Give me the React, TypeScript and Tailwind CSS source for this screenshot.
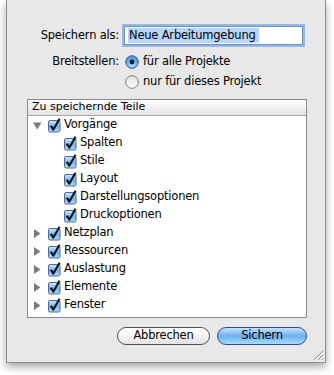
import React from 'react';

const font = { fontFamily: '"Lucida Grande", "DejaVu Sans", sans-serif' };

const CheckBox: React.FC = () => (
    <svg width="14" height="15" viewBox="0 0 14 15" className="shrink-0">
        <defs>
            <linearGradient id="cbg" x1="0" y1="0" x2="0" y2="1">
                <stop offset="0" stopColor="#d3eafd" />
                <stop offset="0.5" stopColor="#72b2ee" />
                <stop offset="1" stopColor="#b2dcfc" />
            </linearGradient>
        </defs>
        <rect x="0.5" y="2.5" width="11.5" height="11.5" rx="1.5" fill="url(#cbg)" stroke="#4a6a96" />
        <path d="M2.8 7.8 L5.4 11.6 L11.6 0.8" fill="none" stroke="#111" strokeWidth="2.1" strokeLinejoin="round" />
    </svg>
);

const Triangle: React.FC<{ open?: boolean }> = ({ open }) => (
    <svg width="9" height="9" viewBox="0 0 9 9" className="shrink-0">
        {open ? <path d="M0 1.5 H8.5 L4.25 8.5 Z" fill="#7b7b7b" /> : <path d="M1 0 L7.5 4.5 L1 9 Z" fill="#7b7b7b" />}
    </svg>
);

const Radio: React.FC<{ on?: boolean }> = ({ on }) => (
    <svg width="14" height="14" viewBox="0 0 14 14" className="shrink-0">
        <defs>
            <radialGradient id="rOn" cx="0.5" cy="0.75" r="0.6">
                <stop offset="0" stopColor="#b7e0ff" />
                <stop offset="1" stopColor="#4f97dc" />
            </radialGradient>
            <linearGradient id="rOff" x1="0" y1="0" x2="0" y2="1">
                <stop offset="0" stopColor="#e2e2e2" />
                <stop offset="1" stopColor="#ffffff" />
            </linearGradient>
        </defs>
        <circle cx="7" cy="7" r="6.3" fill={on ? 'url(#rOn)' : 'url(#rOff)'} stroke={on ? '#2f5a91' : '#7d7d7d'} />
        {on && <circle cx="7" cy="7" r="2.4" fill="#1c1c1c" />}
    </svg>
);

const Row: React.FC<{ label: string; level?: number; open?: boolean }> = ({ label, level = 0, open }) => (
    <div className="flex h-[18px] items-center">
        {level === 0 ? (
            <div className="flex w-[20px] items-center pl-[5px]">
                <Triangle open={open} />
            </div>
        ) : (
            <div className="w-[36px]" />
        )}
        <CheckBox />
        <span className="ml-[2px] text-[11.5px] tracking-[-0.2px] text-black">{label}</span>
    </div>
);

export default function App() {
    return (
        <div className="h-[375px] w-[334px] bg-white" style={font}>
            <div className="ml-[6px] flex h-[363px] w-[320px] flex-col border-x border-b border-[#8c8c8c] bg-[#e8e8e8] shadow-[0_4px_8px_rgba(0,0,0,0.35)]">
                <div className="mt-[26px] flex items-center">
                    <div className="w-[112px] text-right text-[11.5px] tracking-[-0.2px] text-black">Speichern als:</div>
                    <div className="ml-[5px] flex h-[19px] w-[179px] items-center border border-[#6c8fbf] bg-white px-[3px] shadow-[0_0_0_2px_rgba(120,170,230,0.75)]">
                        <span className="bg-[#b5d5ff] pl-px pr-[3px] text-[11.5px] leading-[15px] tracking-[-0.2px] text-black">Neue Arbeitumgebung</span>
                    </div>
                </div>
                <div className="mt-[9px] flex items-start">
                    <div className="flex h-[16px] w-[112px] items-center justify-end text-[11.5px] tracking-[-0.2px] text-black">Breitstellen:</div>
                    <div className="ml-[6px] flex flex-col gap-[4px]">
                        <div className="flex h-[16px] items-center gap-[4px]">
                            <Radio on />
                            <span className="text-[11.5px] tracking-[-0.2px] text-black">für alle Projekte</span>
                        </div>
                        <div className="flex h-[16px] items-center gap-[4px]">
                            <Radio />
                            <span className="text-[11.5px] tracking-[-0.2px] text-black">nur für dieses Projekt</span>
                        </div>
                    </div>
                </div>
                <div className="ml-[20px] mt-[9px] h-[219px] w-[280px] border border-[#8a8a8a] bg-white">
                    <div className="flex h-[16px] items-center border-b border-[#a8a8a8] bg-gradient-to-b from-white to-[#e2e2e2] pl-[4px] text-[11px] text-black">
                        Zu speichernde Teile
                    </div>
                    <Row label="Vorgänge" open />
                    <Row label="Spalten" level={1} />
                    <Row label="Stile" level={1} />
                    <Row label="Layout" level={1} />
                    <Row label="Darstellungsoptionen" level={1} />
                    <Row label="Druckoptionen" level={1} />
                    <Row label="Netzplan" />
                    <Row label="Ressourcen" />
                    <Row label="Auslastung" />
                    <Row label="Elemente" />
                    <Row label="Fenster" />
                </div>
                <div className="mt-[9px] flex items-center gap-[7px] pl-[110px]">
                    <button className="flex h-[18px] w-[93px] items-center justify-center rounded-full border border-[#505050] bg-gradient-to-b from-white via-[#f4f4f4] to-[#e2e2e2] text-[11.5px] tracking-[-0.2px] text-black">
                        Abbrechen
                    </button>
                    <button className="flex h-[18px] w-[90px] items-center justify-center rounded-full border border-[#2e4f86] bg-gradient-to-b from-[#c6e2fc] via-[#6cb0ee] to-[#a6dcfd] text-[11.5px] tracking-[-0.2px] text-black">
                        Sichern
                    </button>
                </div>
                <div className="mt-auto flex justify-end pb-px pr-px">
                    <svg width="12" height="12" viewBox="0 0 12 12">
                        <path d="M11 2 L2 11 M11 6 L6 11 M11 9.5 L9.5 11" stroke="#8a8a8a" strokeWidth="1" />
                        <path d="M11.5 3 L3 11.5 M11.5 7 L7 11.5" stroke="#ffffff" strokeWidth="0.8" />
                    </svg>
                </div>
            </div>
        </div>
    );
}
